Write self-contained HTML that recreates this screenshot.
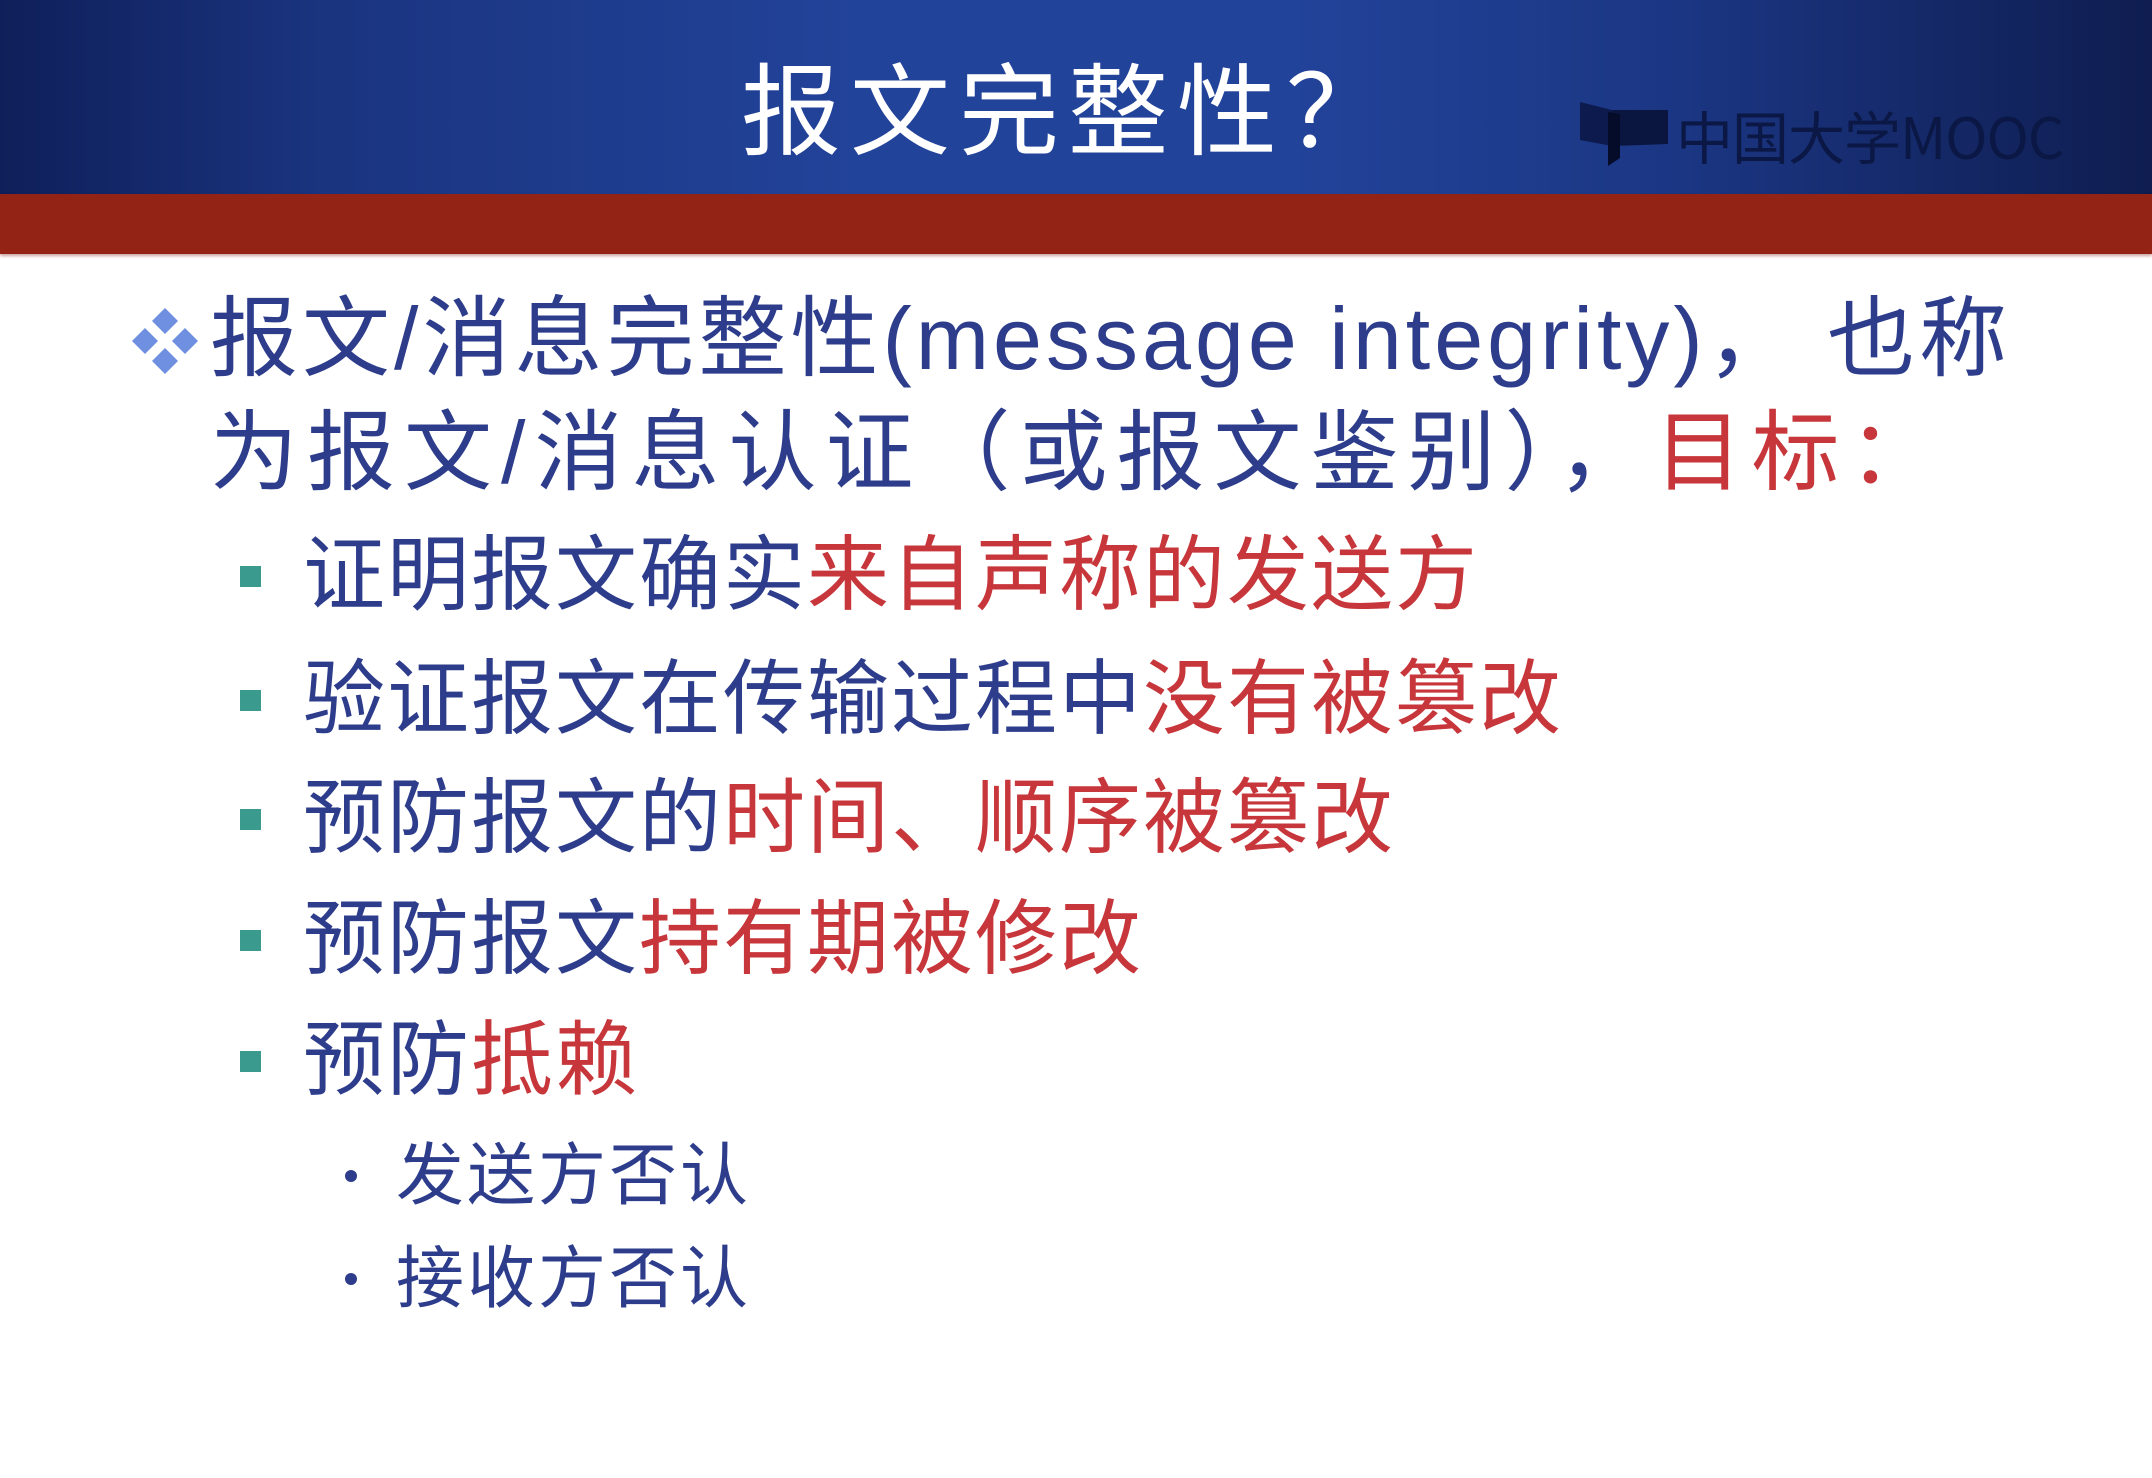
<!DOCTYPE html>
<html><head><meta charset="utf-8"><style>
html,body{margin:0;padding:0;width:2152px;height:1478px;overflow:hidden;background:#fff;}
body{position:relative;font-family:"Liberation Sans","Noto Sans CJK SC",sans-serif;}
.hdr{position:absolute;left:0;top:0;width:2152px;height:194px;background:linear-gradient(90deg,#0f1f5a 0%,#1a347f 15%,#22439a 40%,#22439a 60%,#1b3683 78%,#0f1d50 100%);}
.red{position:absolute;left:0;top:194px;width:2152px;height:60px;background:#932314;box-shadow:0 2px 3px rgba(120,20,10,.4);}
.title{position:absolute;left:741px;top:44px;font-size:100px;line-height:120px;color:#fff;font-family:"Noto Sans CJK SC",sans-serif;letter-spacing:9px;white-space:nowrap;}
.logo{position:absolute;left:1676px;top:100px;font-size:57px;line-height:70px;color:#0b1845;font-family:"Noto Sans CJK SC",sans-serif;letter-spacing:-1px;white-space:nowrap;}
.t{position:absolute;white-space:nowrap;color:#2d3d8c;font-family:"Liberation Sans","Noto Sans CJK SC",sans-serif;}
.r{color:#c7363a;}
.l1{font-size:88px;line-height:110px;}
.l2{font-size:82px;line-height:100px;letter-spacing:2px;}
.l3{font-size:68px;line-height:90px;letter-spacing:3px;}
.sq{position:absolute;width:21px;height:21px;background:#3a9a8e;}
.dot{position:absolute;width:12px;height:12px;border-radius:50%;background:#2d3d8c;}
</style></head><body>
<div class="hdr"></div>
<div class="red"></div>
<div class="title">报文完整性？</div>
<svg style="position:absolute;left:1578px;top:100px" width="94" height="68" viewBox="0 0 94 68"><path d="M2 2 L34 10 L34 46 L2 40 Z" fill="#0c1a4e"/><path d="M34 10 L90 10 L90 44 L34 46 Z" fill="#0a1640"/><path d="M30 12 L42 14 L42 58 L30 66 Z" fill="#050c2a"/></svg>
<div class="logo">中国大学MOOC</div>

<svg style="position:absolute;left:130px;top:306px" width="70" height="70" viewBox="0 0 70 70"><g fill="#6f8fe0"><path d="M35 2 L48 15 L35 28 L22 15Z"/><path d="M35 42 L48 55 L35 68 L22 55Z"/><path d="M15 22 L28 35 L15 48 L2 35Z"/><path d="M55 22 L68 35 L55 48 L42 35Z"/></g></svg>
<div class="t l1" style="left:210px;top:284px;letter-spacing:4px">报文/消息完整性(message integrity)，&nbsp;也称</div>
<div class="t l1" style="left:210px;top:398px;letter-spacing:9px">为报文/消息认证（或报文鉴别），<span class="r">目标：</span></div>

<div class="sq" style="left:240px;top:566px"></div>
<div class="t l2" style="left:303px;top:526px">证明报文确实<span class="r">来自声称的发送方</span></div>
<div class="sq" style="left:240px;top:690px"></div>
<div class="t l2" style="left:303px;top:650px">验证报文在传输过程中<span class="r">没有被篡改</span></div>
<div class="sq" style="left:240px;top:809px"></div>
<div class="t l2" style="left:303px;top:769px">预防报文的<span class="r">时间、顺序被篡改</span></div>
<div class="sq" style="left:240px;top:930px"></div>
<div class="t l2" style="left:303px;top:890px">预防报文<span class="r">持有期被修改</span></div>
<div class="sq" style="left:240px;top:1051px"></div>
<div class="t l2" style="left:303px;top:1011px">预防<span class="r">抵赖</span></div>

<div class="dot" style="left:345px;top:1170px"></div>
<div class="t l3" style="left:396px;top:1131px">发送方否认</div>
<div class="dot" style="left:345px;top:1273px"></div>
<div class="t l3" style="left:396px;top:1234px">接收方否认</div>
</body></html>
